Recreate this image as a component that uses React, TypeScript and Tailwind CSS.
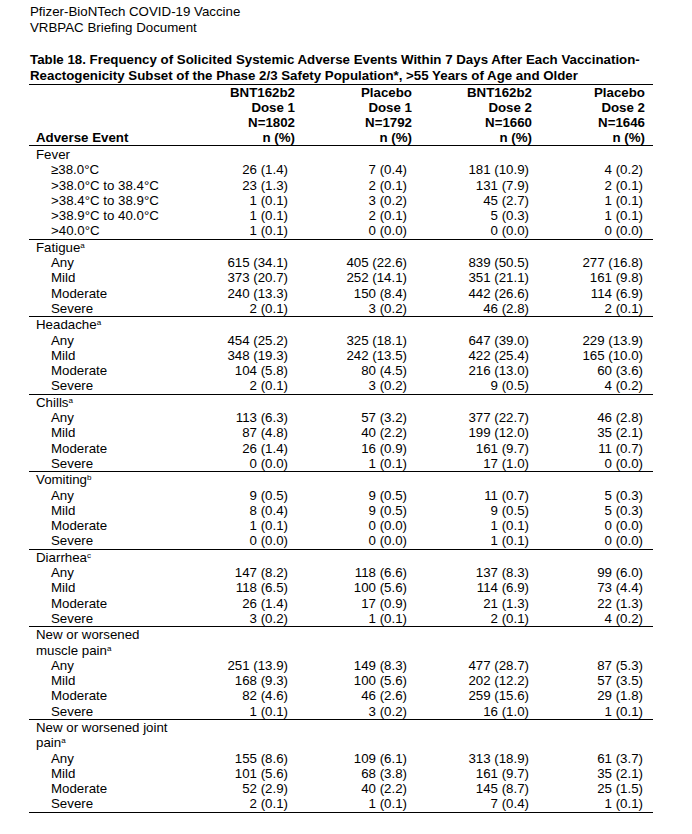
import React from "react";

type Row = [string, string, string, string, string];

interface Section {
  label: React.ReactNode;
  rows: Row[];
}

const sections: Section[] = [
  {
    label: "Fever",
    rows: [
      ["≥38.0°C", "26 (1.4)", "7 (0.4)", "181 (10.9)", "4 (0.2)"],
      [">38.0°C to 38.4°C", "23 (1.3)", "2 (0.1)", "131 (7.9)", "2 (0.1)"],
      [">38.4°C to 38.9°C", "1 (0.1)", "3 (0.2)", "45 (2.7)", "1 (0.1)"],
      [">38.9°C to 40.0°C", "1 (0.1)", "2 (0.1)", "5 (0.3)", "1 (0.1)"],
      [">40.0°C", "1 (0.1)", "0 (0.0)", "0 (0.0)", "0 (0.0)"],
    ],
  },
  {
    label: <>Fatigue<sup className="text-[8px]">a</sup></>,
    rows: [
      ["Any", "615 (34.1)", "405 (22.6)", "839 (50.5)", "277 (16.8)"],
      ["Mild", "373 (20.7)", "252 (14.1)", "351 (21.1)", "161 (9.8)"],
      ["Moderate", "240 (13.3)", "150 (8.4)", "442 (26.6)", "114 (6.9)"],
      ["Severe", "2 (0.1)", "3 (0.2)", "46 (2.8)", "2 (0.1)"],
    ],
  },
  {
    label: <>Headache<sup className="text-[8px]">a</sup></>,
    rows: [
      ["Any", "454 (25.2)", "325 (18.1)", "647 (39.0)", "229 (13.9)"],
      ["Mild", "348 (19.3)", "242 (13.5)", "422 (25.4)", "165 (10.0)"],
      ["Moderate", "104 (5.8)", "80 (4.5)", "216 (13.0)", "60 (3.6)"],
      ["Severe", "2 (0.1)", "3 (0.2)", "9 (0.5)", "4 (0.2)"],
    ],
  },
  {
    label: <>Chills<sup className="text-[8px]">a</sup></>,
    rows: [
      ["Any", "113 (6.3)", "57 (3.2)", "377 (22.7)", "46 (2.8)"],
      ["Mild", "87 (4.8)", "40 (2.2)", "199 (12.0)", "35 (2.1)"],
      ["Moderate", "26 (1.4)", "16 (0.9)", "161 (9.7)", "11 (0.7)"],
      ["Severe", "0 (0.0)", "1 (0.1)", "17 (1.0)", "0 (0.0)"],
    ],
  },
  {
    label: <>Vomiting<sup className="text-[8px]">b</sup></>,
    rows: [
      ["Any", "9 (0.5)", "9 (0.5)", "11 (0.7)", "5 (0.3)"],
      ["Mild", "8 (0.4)", "9 (0.5)", "9 (0.5)", "5 (0.3)"],
      ["Moderate", "1 (0.1)", "0 (0.0)", "1 (0.1)", "0 (0.0)"],
      ["Severe", "0 (0.0)", "0 (0.0)", "1 (0.1)", "0 (0.0)"],
    ],
  },
  {
    label: <>Diarrhea<sup className="text-[8px]">c</sup></>,
    rows: [
      ["Any", "147 (8.2)", "118 (6.6)", "137 (8.3)", "99 (6.0)"],
      ["Mild", "118 (6.5)", "100 (5.6)", "114 (6.9)", "73 (4.4)"],
      ["Moderate", "26 (1.4)", "17 (0.9)", "21 (1.3)", "22 (1.3)"],
      ["Severe", "3 (0.2)", "1 (0.1)", "2 (0.1)", "4 (0.2)"],
    ],
  },
  {
    label: <>New or worsened<br />muscle pain<sup className="text-[8px]">a</sup></>,
    rows: [
      ["Any", "251 (13.9)", "149 (8.3)", "477 (28.7)", "87 (5.3)"],
      ["Mild", "168 (9.3)", "100 (5.6)", "202 (12.2)", "57 (3.5)"],
      ["Moderate", "82 (4.6)", "46 (2.6)", "259 (15.6)", "29 (1.8)"],
      ["Severe", "1 (0.1)", "3 (0.2)", "16 (1.0)", "1 (0.1)"],
    ],
  },
  {
    label: <>New or worsened joint<br />pain<sup className="text-[8px]">a</sup></>,
    rows: [
      ["Any", "155 (8.6)", "109 (6.1)", "313 (18.9)", "61 (3.7)"],
      ["Mild", "101 (5.6)", "68 (3.8)", "161 (9.7)", "35 (2.1)"],
      ["Moderate", "52 (2.9)", "40 (2.2)", "145 (8.7)", "25 (1.5)"],
      ["Severe", "2 (0.1)", "1 (0.1)", "7 (0.4)", "1 (0.1)"],
    ],
  },
];

const grid = "grid grid-cols-[151px_115px_117px_120px_113px]";

const DataRow = ({ row }: { row: Row }) => (
  <div className={grid}>
    <div className="pl-[22px]">{row[0]}</div>
    <div className="text-right pr-[7px]">{row[1]}</div>
    <div className="text-right pr-[5px]">{row[2]}</div>
    <div className="text-right pr-[3px]">{row[3]}</div>
    <div className="text-right pr-[2px]">{row[4]}</div>
  </div>
);

export default function App() {
  return (
    <div className="min-h-[834px] w-[692px] bg-white text-black font-['Liberation_Sans',Arial,sans-serif] text-[13.3px]">
      <div className="pl-[30px] pt-[4px] leading-[16px]">
        <div>Pfizer-BioNTech COVID-19 Vaccine</div>
        <div>VRBPAC Briefing Document</div>
      </div>

      <div className="ml-[29px] w-[624px]">
        <div className="mt-[16px] pl-[1px] font-bold leading-[16px] border-b border-black">
          Table 18. Frequency of Solicited Systemic Adverse Events Within 7 Days After Each Vaccination-
          <br />
          Reactogenicity Subset of the Phase 2/3 Safety Population*, &gt;55 Years of Age and Older
        </div>

        <div className={`${grid} font-bold leading-[15px] border-b border-black`}>
          <div className="pl-[7px] flex items-end">Adverse Event</div>
          <div className="text-right">BNT162b2<br />Dose 1<br />N=1802<br />n (%)</div>
          <div className="text-right">Placebo<br />Dose 1<br />N=1792<br />n (%)</div>
          <div className="text-right">BNT162b2<br />Dose 2<br />N=1660<br />n (%)</div>
          <div className="text-right">Placebo<br />Dose 2<br />N=1646<br />n (%)</div>
        </div>

        <div className="leading-[15.3px]">
          {sections.map((s, i) => (
            <div key={i} className={`border-b border-black ${i === 0 ? "pt-[1px]" : ""}`}>
              <div className="pl-[7px]">{s.label}</div>
              {s.rows.map((r, j) => (
                <DataRow key={j} row={r} />
              ))}
            </div>
          ))}
        </div>
      </div>
    </div>
  );
}
